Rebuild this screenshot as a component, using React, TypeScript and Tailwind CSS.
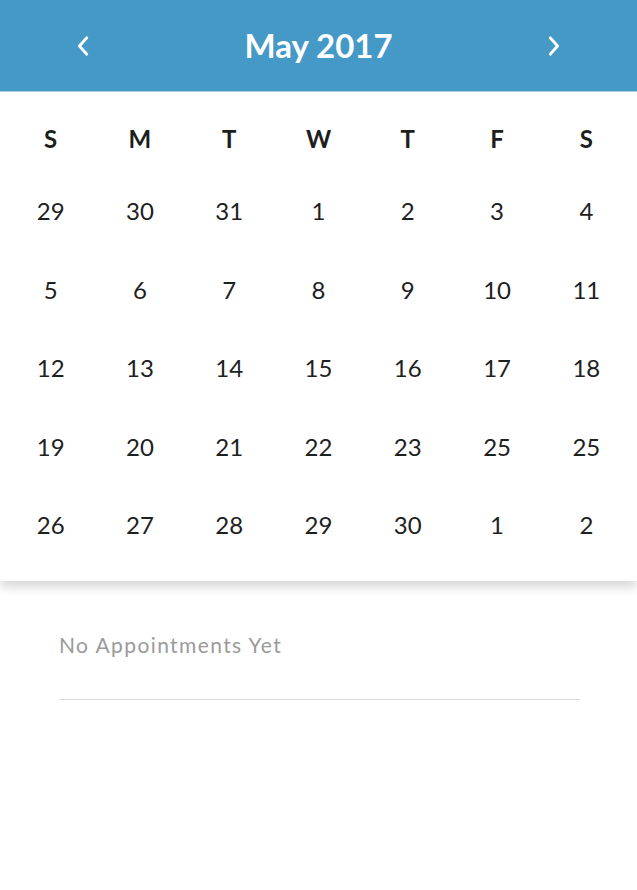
import React from "react";

const days = ["S", "M", "T", "W", "T", "F", "S"];
const weeks = [
  ["29", "30", "31", "1", "2", "3", "4"],
  ["5", "6", "7", "8", "9", "10", "11"],
  ["12", "13", "14", "15", "16", "17", "18"],
  ["19", "20", "21", "22", "23", "25", "25"],
  ["26", "27", "28", "29", "30", "1", "2"],
];

function Chevron({ dir }: { dir: "left" | "right" }) {
  return (
    <svg width="14" height="24" viewBox="0 0 14 24" fill="none">
      <path
        d={dir === "left" ? "M10.8 3.8 L3.4 12 L10.8 20.2" : "M3.2 3.8 L10.6 12 L3.2 20.2"}
        stroke="white"
        strokeWidth="2.8"
        strokeLinecap="round"
        strokeLinejoin="round"
      />
    </svg>
  );
}

export default function App() {
  return (
    <div className="w-full min-h-[890px] bg-white" style={{ fontFamily: "Lato, 'Noto Sans', sans-serif" }}>
      <div className="bg-white shadow-[0_6px_10px_rgba(0,0,0,0.16)]">
        <div className="h-[92px] bg-[#4499c6] border-b border-[#a9d0e6] flex items-center justify-between px-[76px]">
          <Chevron dir="left" />
          <div className="text-white font-bold text-[33px] leading-none">May 2017</div>
          <Chevron dir="right" />
        </div>
        <div className="px-[6px] pt-[35px] pb-[16px]">
          <div className="grid grid-cols-7 h-[24px] mb-[21px]">
            {days.map((d, i) => (
              <div key={i} className="flex items-center justify-center text-[24px] font-bold text-[#1b201c] leading-none">
                {d}
              </div>
            ))}
          </div>
          {weeks.map((w, wi) => (
            <div key={wi} className="grid grid-cols-7 h-[78.5px]">
              {w.map((n, i) => (
                <div key={i} className="flex items-center justify-center text-[24px] text-[#1d211e] leading-none">
                  {n}
                </div>
              ))}
            </div>
          ))}
        </div>
      </div>
      <div className="px-[59px] pt-[53px]">
        <div className="text-[21px] text-[#9a9a9a] leading-none tracking-[1.4px]">No Appointments Yet</div>
        <div className="mt-[44px] h-px bg-[#dcdcdc] w-[521px]" />
      </div>
    </div>
  );
}
